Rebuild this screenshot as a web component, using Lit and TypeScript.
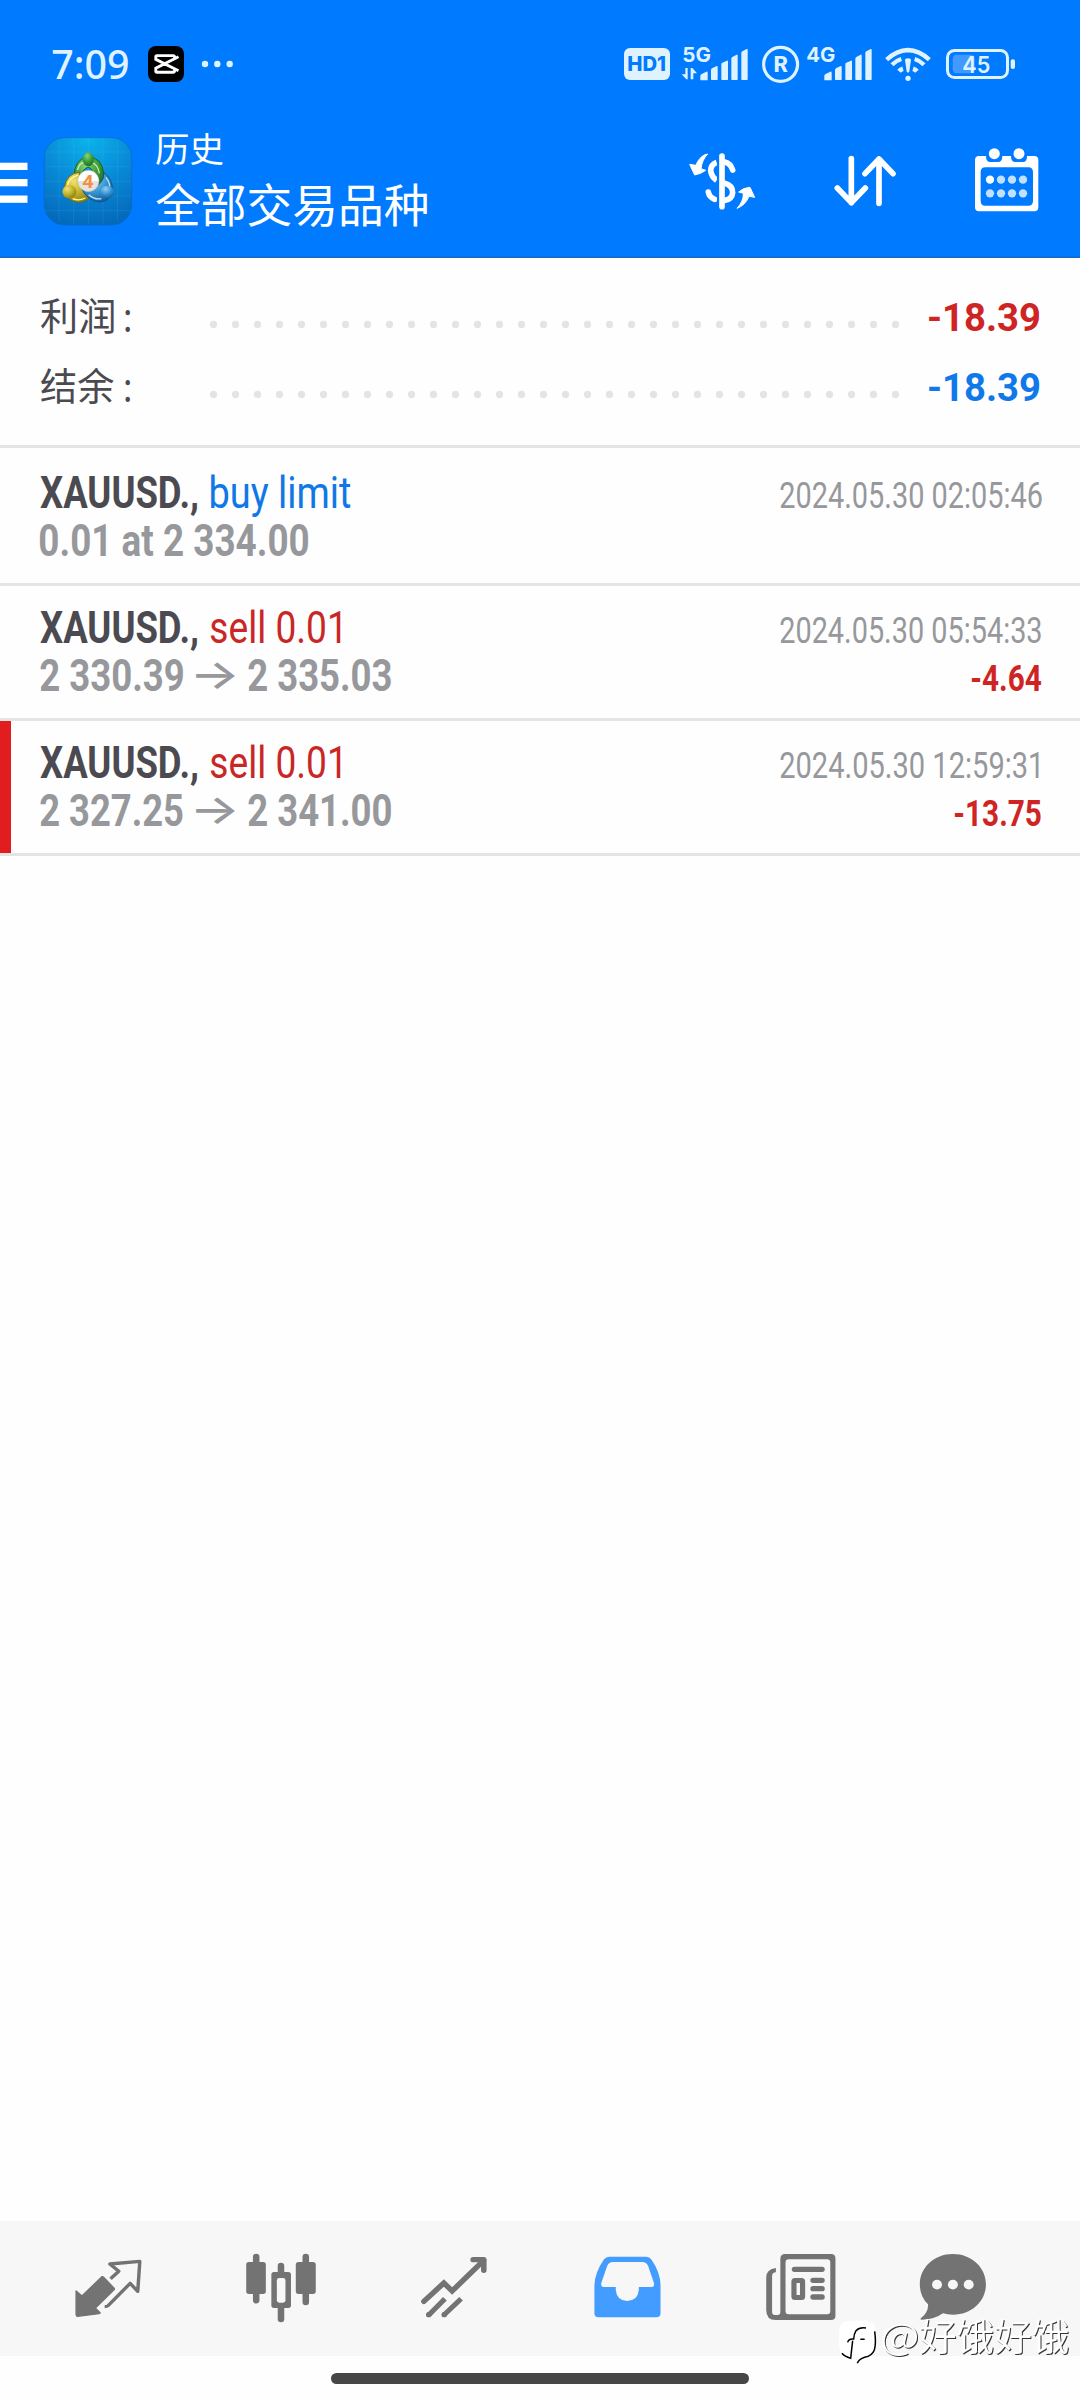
import { LitElement, html, css, svg } from "lit";
import { customElement } from "lit/decorators.js";

const SANS = '"Roboto", "Noto Sans CJK SC", sans-serif';
const CJK = '"Noto Sans CJK SC", sans-serif';

interface FitOptions {
  width: number;
  size: number;
  height: number;
  baseline: number;
  weight?: number;
  color?: string;
  family?: string;
}

const measurer = document.createElement("canvas").getContext("2d")!;

/** A line of text whose inked width is condensed or widened to a given number of pixels. */
function fit(text: string, o: FitOptions) {
  const weight = o.weight ?? 400;
  const family = o.family ?? SANS;
  measurer.font = `${weight} ${o.size}px ${family}`;
  const m = measurer.measureText(text);
  const ink = m.actualBoundingBoxLeft + m.actualBoundingBoxRight;
  const s = o.width / ink;
  return html`<svg class="fit" width=${o.width} height=${o.height}>
    <text
      transform="translate(${m.actualBoundingBoxLeft * s} ${o.baseline}) scale(${s} 1)"
      font-family=${family}
      font-size=${o.size}
      font-weight=${weight}
      fill=${o.color ?? "#fff"}
    >${text}</text>
  </svg>`;
}

/** Fitted text placed inside a drawing; the scale is that of the drawing. */
function inkText(text: string, x: number, y: number, width: number, size: number, weight: number, color: string, family = SANS) {
  measurer.font = `${weight} ${size}px ${family}`;
  const m = measurer.measureText(text);
  const s = width / (m.actualBoundingBoxLeft + m.actualBoundingBoxRight);
  return svg`<text transform="translate(${x + m.actualBoundingBoxLeft * s} ${y}) scale(${s} 1)"
    font-family=${family} font-size=${size} font-weight=${weight} fill=${color}>${text}</text>`;
}

/** One tile of a bar: its slice of the bar's canvas, x to x + w. */
function tile(x: number, y: number, w: number, h: number, body: unknown) {
  return html`<svg class="tile" width=${w} height=${h} viewBox="${x} ${y} ${w} ${h}">${body}</svg>`;
}

const ICE = "#dff2ff";
const BLUE = "#007aff";
const GREY = "#737373";

const bars = (dx: number) => svg`<g fill=${ICE} transform="translate(${dx} 0)">
  <path d="M301 180v-12q0-4 4-6l14-7q4-2 4 3v22q0 1-2 1h-18q-2 0-2-1z"/>
  <path d="M333 178v-27q0-4 3-6l14-7q3-1 3 3v37q0 2-2 2h-16q-2 0-2-2z"/>
  <path d="M364 178v-45q0-4 3-5l14-6q3-1 3 3v53q0 2-2 2h-16q-2 0-2-2z"/>
  <path d="M394 178v-61q0-4 3-6l13-7q3-1 3 3v71q0 2-2 2h-15q-2 0-2-2z"/>
  <path d="M424 178v-78q0-4 3-6l13-7q3-1 3 3v88q0 2-2 2h-15q-2 0-2-2z"/></g>`;

const third = (body: unknown) => svg`<g transform="translate(600 20) scale(.33333)">${body}</g>`;

const clockTile = tile(0, 0, 140, 96, inkText("7:09", 52.3, 78.6, 75.5, 40, 500, ICE, '"Noto Sans", sans-serif'));
const capcutTile = tile(140, 0, 52, 96, svg`
  <rect x="148" y="46" width="36" height="36" rx="8" fill="#000"/>
  <path d="M178.500 56.800L155.800 68.200V71.200Q155.800 72.200 157 72.200H173.200Q174.600 72.200 174.600 70.500V69.500M178.500 70.800L155.800 59.400V56.800Q155.800 55.600 157 55.600H173.200Q174.600 55.600 174.600 57.500V58.200"
    fill="none" stroke="#fff" stroke-width="2.900"/>`);
const moreTile = tile(192, 0, 50, 96, svg`<g fill=${ICE}>
  <circle cx="205" cy="64" r="3.200"/><circle cx="217.300" cy="64" r="3.200"/><circle cx="229.700" cy="64" r="3.200"/></g>`);

const hdTile = tile(612, 0, 64, 96, svg`
  <rect x="624" y="48" width="46" height="32" rx="6" fill=${ICE}/>
  ${inkText("HD1", 628.3, 71.2, 36.7, 20.5, 800, BLUE, '"Inter", sans-serif')}`);
const fiveTile = tile(676, 0, 80, 96, svg`
  ${inkText("5G", 683.3, 61.8, 27.3, 20.5, 700, ICE, '"Inter", sans-serif')}
  ${third(svg`<path d="M256 144h7v34h-4l-14-15h11zM272 178v-34h5l14 16h-11v18z" fill=${ICE}/>${bars(0)}`)}`);
const rTile = tile(756, 0, 48, 96, svg`
  <circle cx="780.600" cy="64.300" r="17" fill="none" stroke=${ICE} stroke-width="3.200"/>
  ${inkText("R", 774.6, 72.4, 13, 22.5, 800, ICE)}`);
const fourTile = tile(804, 0, 74, 96, svg`
  ${inkText("4G", 807.3, 61.8, 27.7, 20.5, 700, ICE, '"Inter", sans-serif')}
  ${third(bars(372))}`);
const wifiTile = tile(878, 0, 60, 96, third(svg`<g fill="none" stroke=${ICE}>
  <path d="M860 119Q890 91 924 90Q958 91 988 119" stroke-width="13"/>
  <path d="M876 134Q888 122 904 117M944 117Q960 122 972 134" stroke-width="13"/>
  <path d="M897 154Q902 148 909 146M939 146Q946 148 951 154" stroke-width="14"/></g>
  <path d="M915 120q0-5 9-5t9 5l-5 34q-1 4-4 4t-4-4z" fill=${ICE}/>
  <circle cx="924" cy="175" r="8" fill=${ICE}/>`));
const batteryTile = tile(938, 0, 142, 96, svg`
  <rect x="947.500" y="50.500" width="60" height="27" rx="7" fill="none" stroke=${ICE} stroke-width="3"/>
  <rect x="952.700" y="54.700" width="22" height="18.500" rx="4" fill="#409aff"/>
  <rect x="1010.700" y="59.300" width="4.300" height="9.700" rx="2" fill=${ICE}/>
  ${inkText("45", 963.3, 72.8, 26.7, 23, 600, ICE, '"Inter", sans-serif')}`);

const menuTile = tile(0, 96, 40, 160, svg`<g fill="#fff">
  <rect x="0" y="162.700" width="27.500" height="7.300"/><rect x="0" y="179" width="27.500" height="7.300"/><rect x="0" y="195.500" width="27.500" height="7.300"/></g>`);

const logoTile = tile(40, 96, 116, 160, svg`
  <defs>
    <radialGradient id="sky" cx=".5" cy="0" r="1.050"><stop offset="0" stop-color="#0bb4ec"/><stop offset=".5" stop-color="#088ad6"/><stop offset="1" stop-color="#0467b9"/></radialGradient>
    <radialGradient id="green" cx=".4" cy=".25" r=".8"><stop offset="0" stop-color="#8fd27a"/><stop offset=".5" stop-color="#3f9f3c"/><stop offset="1" stop-color="#176b22"/></radialGradient>
    <radialGradient id="gold" cx=".35" cy=".3" r=".8"><stop offset="0" stop-color="#f0e270"/><stop offset=".5" stop-color="#c4b32d"/><stop offset="1" stop-color="#85780f"/></radialGradient>
    <radialGradient id="azure" cx=".4" cy=".25" r=".8"><stop offset="0" stop-color="#8fd0f2"/><stop offset=".5" stop-color="#3a97d4"/><stop offset="1" stop-color="#125b9b"/></radialGradient>
    <linearGradient id="disc" x1="0" y1="0" x2="0" y2="1"><stop offset=".5" stop-color="#fff"/><stop offset=".52" stop-color="#e4e2e2"/></linearGradient>
  </defs>
  <g transform="translate(30 120) scale(.33333)">
    <rect x="43" y="53" width="262" height="262" rx="60" fill="url(#sky)" stroke="#0868c4" stroke-width="2"/>
    <path d="M131 55V313M175 55V313M219 55V313M262 62V306M87 62V306M45 96H303M45 140H303M45 184H303M45 228H303M45 271H303" stroke="#7fd4f5" stroke-opacity=".18" stroke-width="2"/>
    <path d="M132 168Q134 116 175 110Q217 114 221 160Q222 182 204 208L186 150Q176 134 162 150L153 164Z" fill="url(#green)" stroke="#19602a" stroke-width="3"/>
    <path d="M142 150Q150 124 166 128M186 128Q204 134 208 160" fill="none" stroke="#c2ecb4" stroke-width="4"/>
    <path d="M150 156Q108 160 103 204Q106 244 146 247Q172 246 184 226L162 204Q142 180 150 156Z" fill="url(#gold)" stroke="#6f6a1a" stroke-width="3"/>
    <path d="M145 165Q116 172 112 198M128 236Q146 244 166 234" fill="none" stroke="#fff6a0" stroke-width="4"/>
    <path d="M222 158Q246 176 247 206Q244 244 208 246Q172 242 155 206Q190 216 212 188Q222 176 222 158Z" fill="url(#azure)" stroke="#13528b" stroke-width="3"/>
    <path d="M228 172Q238 184 240 200M176 224Q194 240 214 236" fill="none" stroke="#b9e6fb" stroke-width="4"/>
    <ellipse cx="175" cy="118" rx="17" ry="21" fill="url(#green)"/>
    <ellipse cx="118" cy="215" rx="21" ry="20" fill="url(#gold)"/>
    <ellipse cx="231" cy="216" rx="21" ry="19" fill="url(#azure)"/>
    <circle cx="175" cy="183" r="32" fill="url(#disc)" stroke="#b9b3a8" stroke-width="1.500"/>
    ${inkText("4", 158, 203, 32, 56, 700, "#f4913c")}
  </g>`);

const currencyTile = tile(660, 96, 130, 160, third(svg`<g fill="none" stroke="#fff" stroke-linecap="round">
    <path d="M366 408V560" stroke-width="17"/>
    <path d="M374 426Q392 430 398 450M374 490Q398 496 398 518Q396 538 374 541M325 516Q328 532 344 538" stroke-width="17"/>
    <path d="M350 427Q332 434 332 452Q334 470 350 481" stroke-width="17" stroke-linecap="butt"/>
  </g>
  <path d="M354 405V562" stroke=${BLUE} stroke-width="6"/>
  <g fill="#fff" stroke="#fff" stroke-linejoin="round" stroke-width="3">
    <path d="M323 402Q302 404 287 436L269 433L284 465Q303 462 317 451L303 446Q306 420 323 402Z"/>
    <path d="M411 565Q431 544 430 520L416 516Q430 503 450 502L464 532L447 529Q436 556 411 565Z"/>
  </g>`));
const sortTile = tile(790, 96, 150, 160, third(svg`<g fill="none" stroke="#fff" stroke-width="17" stroke-linecap="round" stroke-linejoin="round">
    <path d="M754 416V548M712 504L754 548L796 504"/><path d="M837 550V418M795 461L837 417L879 461"/></g>`));
const calendarTile = tile(940, 96, 140, 160, third(svg`
  <path fill="#fff" fill-rule="evenodd" d="M1137 408H1158Q1158 426 1171 426H1194Q1207 426 1207 408H1233Q1233 426 1246 426H1269Q1281 426 1281 408H1303Q1315 408 1315 420V562Q1315 574 1303 574H1137Q1125 574 1125 562V420Q1125 408 1137 408ZM1156 442Q1142 442 1142 456V543Q1142 557 1156 557H1285Q1299 557 1299 543V456Q1299 442 1285 442Z"/>
  <circle cx="1183" cy="401" r="16.500" fill="#fff"/><circle cx="1257" cy="401" r="16.500" fill="#fff"/>
  <circle cx="1170" cy="479" r="12.500" fill="#fff"/>
  <g fill="#c2e0ff"><circle cx="1203" cy="479" r="12.500"/><circle cx="1236" cy="479" r="12.500"/><circle cx="1269" cy="479" r="12.500"/>
  <circle cx="1170" cy="520" r="12.500"/><circle cx="1203" cy="520" r="12.500"/><circle cx="1236" cy="520" r="12.500"/><circle cx="1269" cy="520" r="12.500"/></g>`));

const navLeft = (x: number, w: number, body: unknown) =>
  tile(x, 2221, w, 135, svg`<g transform="translate(0 2210) scale(.34435 .33333)">${body}</g>`);
const navRight = (x: number, w: number, body: unknown) =>
  tile(x, 2221, w, 135, svg`<g transform="translate(540 2210) scale(.34435 .33333)">${body}</g>`);

const quotesTile = navLeft(22, 173, svg`
  <path fill=${GREY} stroke=${GREY} stroke-width="4" stroke-linejoin="round" d="M221 243L238 258L296 200Q298 199 300 201L332 235Q333 237 331 239L277 294L291 309Q291 310 287 311L226 319Q221 319 221 314Z"/>
  <path fill="none" stroke=${GREY} stroke-width="10" stroke-linejoin="round" d="M321 206L345 184L319 162L406 154L400 244L378 220L314 287Q311 290 304 290"/>`);
const chartTile = navLeft(195, 173, svg`
  <g stroke=${GREY} stroke-width="19" stroke-linecap="round"><path d="M744 141V271M888 141V276M816 168V196M816 288V327"/></g>
  <rect x="715" y="156" width="57" height="96" rx="8" fill=${GREY}/><rect x="859" y="156" width="58" height="96" rx="8" fill=${GREY}/>
  <rect x="788" y="186" width="57" height="108" rx="8" fill=${GREY}/><rect x="804" y="204" width="25" height="74" rx="7" fill="#f7f7f7"/>`);
const tradeTile = navLeft(368, 172, svg`<g fill="none" stroke=${GREY} stroke-width="16">
  <path d="M1231 274L1289 219L1313 243L1404 152" stroke-linecap="round"/>
  <path d="M1374 149H1405V181" stroke-linecap="round" stroke-linejoin="round"/></g>
  <g stroke=${GREY} stroke-width="15"><path d="M1246 314L1292 266M1290 314L1339 266"/></g>
  <g fill=${GREY}><circle cx="1245" cy="314" r="8"/><circle cx="1290" cy="314" r="8"/></g>`);
const historyTile = navRight(540, 173, svg`
  <path fill="#439cff" fill-rule="evenodd" d="M201 140H309Q318 140 323 148Q350 188 350 226V310Q350 322 338 322H170Q158 322 158 310V226Q159 188 186 148Q192 140 201 140ZM212 156Q200 156 195 168L178 219Q176 231 185 231H220V240Q223 272 253 273Q284 272 287 240V231H325Q333 231 331 219L314 168Q309 156 297 156Z"/>`);
const newsTile = navRight(713, 160, svg`
  <path fill=${GREY} fill-rule="evenodd" d="M712 132H845Q858 132 858 145V317Q858 330 845 330H684Q657 330 657 300V202Q657 178 685 174V187Q674 188 674 198V306Q674 315 682 315H690Q698 315 698 306V146Q698 132 712 132ZM722 148Q713 148 713 157V304Q713 313 722 313H834Q843 313 843 304V157Q843 148 834 148Z"/>
  <path d="M739 178H819M793 211H819M793 236H819M793 261H819" stroke=${GREY} stroke-width="16" stroke-linecap="round"/>
  <rect x="737.500" y="211.500" width="25" height="51" rx="3" fill="none" stroke=${GREY} stroke-width="15"/>`);
const chatTile = navRight(873, 160, svg`
  <path fill=${GREY} d="M1199 132C1254 132 1295 173 1295 223C1295 273 1254 314 1199 314Q1184 314 1170 310Q1146 329 1107 329Q1103 328 1106 325Q1128 308 1127 283Q1103 260 1103 223C1103 173 1144 132 1199 132Z"/>
  <g fill="#f7f7f7"><circle cx="1153" cy="224" r="14.500"/><circle cx="1199" cy="224" r="14.500"/><circle cx="1245" cy="224" r="14.500"/></g>`);

interface Trade {
  side: string;
  sideWidth: number;
  buy: boolean;
  time: string;
  timeWidth: number;
  open: string;
  close?: string;
  profit?: string;
  profitWidth?: number;
  marked?: boolean;
}

const TRADES: Trade[] = [
  { side: "buy limit", sideWidth: 139.3, buy: true, time: "2024.05.30 02:05:46", timeWidth: 262, open: "0.01 at 2 334.00" },
  { side: "sell 0.01", sideWidth: 129.5, buy: false, time: "2024.05.30 05:54:33", timeWidth: 261.5, open: "2 330.39", close: "2 335.03", profit: "-4.64", profitWidth: 69.3 },
  { side: "sell 0.01", sideWidth: 129.5, buy: false, time: "2024.05.30 12:59:31", timeWidth: 258.5, open: "2 327.25", close: "2 341.00", profit: "-13.75", profitWidth: 86.3, marked: true },
];

@customElement("trade-row")
class TradeRow extends LitElement {
  static properties = { trade: { attribute: false } };
  declare trade: Trade;

  static styles = css`
    :host { display: block; }
    .row { display: flex; justify-content: space-between; box-sizing: border-box; height: 135px; padding: 19px 38px 0 40px; border-bottom: 3px solid #e4e4e4; }
    .marked { padding-left: 29px; border-bottom: none; height: 132px; border-left: 11px solid #e11d1f; }
    .rule { height: 3px; background: #e4e4e4; }
    .line { display: flex; height: 48px; gap: 13px; }
    .prices { gap: 12.600px; }
    .right { width: 262px; }
    .profit { display: flex; justify-content: flex-end; padding-right: 1px; }
    .fit { display: block; overflow: visible; flex: none; }
  `;

  render() {
    const t = this.trade;
    const box = { height: 48, baseline: 37.7 };
    const price = { ...box, size: 44, weight: 700, color: "#97989c" };
    return html`
      <div class="row ${t.marked ? "marked" : ""}">
        <div>
          <div class="line">
            ${fit("XAUUSD.,", { ...box, width: 157.7, size: 43.5, weight: 700, color: "#4b4a50" })}
            ${fit(t.side, { ...box, width: t.sideWidth, size: 44, weight: 450, color: t.buy ? "#0f78e6" : "#c92626" })}
          </div>
          <div class="line prices">
            ${fit(t.open, { ...price, width: t.close ? 143 : 268.7 })}
            ${t.close
              ? html`${fit("→", { ...price, baseline: 36, width: 40, size: 41, weight: 500, family: '"Inter", sans-serif' })}
                ${fit(t.close, { ...price, width: 143.5 })}`
              : ""}
          </div>
        </div>
        <div class="right">
          <div class="line">${fit(t.time, { ...box, width: t.timeWidth, size: 36.5, weight: 450, color: "#97989c" })}</div>
          ${t.profit
            ? html`<div class="profit">${fit(t.profit, { ...box, width: t.profitWidth!, size: 36, weight: 700, color: "#cf2424" })}</div>`
            : ""}
        </div>
      </div>
      ${t.marked ? html`<div class="rule"></div>` : ""}
    `;
  }
}

@customElement("app-root")
class AppRoot extends LitElement {
  static styles = css`
    :host { display: block; width: 1080px; height: 2400px; font-family: "Roboto", "Noto Sans CJK SC", sans-serif; }
    .screen { position: relative; display: flex; flex-direction: column; width: 1080px; height: 2400px; background: #fefefe; overflow: hidden; }
    .top { background: #007aff; border-bottom: 2px solid #0d6fdc; }
    .bar { display: flex; }
    .push { margin-left: auto; }
    .tile, .fit { display: block; overflow: visible; flex: none; }
    .summary { box-sizing: border-box; height: 190px; padding: 28px 40px 0 40.500px; border-bottom: 3px solid #e4e4e4; }
    .total { display: flex; height: 70px; }
    .label { display: flex; gap: 11.500px; width: 169.500px; }
    .value { margin-left: auto; }
    .list { padding-top: 3px; }
    .nav { display: flex; height: 135px; margin-top: auto; padding-left: 22px; background: #f7f7f7; }
    .home { display: flex; justify-content: center; height: 27px; padding-top: 17px; }
    .handle { width: 418px; height: 11px; border-radius: 5.500px; background: #464646; }
    .mark { position: absolute; left: 836px; top: 2310px; }
    .shaded { filter: drop-shadow(1px 1px 0 #333); }
  `;

  private total(label: string, color: string) {
    return html`<div class="total">
      <div class="label">
        ${fit(label, { width: 73.4, size: 38, height: 70, baseline: 43.7, color: "#4b4a50", family: CJK })}
        ${fit(":", { width: 5.6, size: 40, height: 70, baseline: 45.5, weight: 500, color: "#4b4a50" })}
      </div>
      <svg class="tile" width="690" height="70" fill="#e4e4e4">
        ${Array.from({ length: 32 }, (_, i) => svg`<circle cx=${3.5 + i * 22} cy="38.400" r="3.600"/>`)}
      </svg>
      <div class="value">${fit("-18.39", { width: 111, size: 38.5, height: 70, baseline: 45, weight: 700, color })}</div>
    </div>`;
  }

  render() {
    return html`<div class="screen">
      <header class="top">
        <div class="bar">
          ${clockTile}${capcutTile}${moreTile}
          <div class="bar push">${hdTile}${fiveTile}${rTile}${fourTile}${wifiTile}${batteryTile}</div>
        </div>
        <div class="bar">
          ${menuTile}${logoTile}
          <div>
            ${fit("历史", { width: 67, size: 34, height: 82, baseline: 66, family: CJK })}
            ${fit("全部交易品种", { width: 271.5, size: 46, height: 78, baseline: 43.5, family: CJK })}
          </div>
          <div class="bar push">${currencyTile}${sortTile}${calendarTile}</div>
        </div>
      </header>
      <section class="summary">${this.total("利润", "#cf2424")}${this.total("结余", "#1079ea")}</section>
      <section class="list">${TRADES.map((t) => html`<trade-row .trade=${t}></trade-row>`)}</section>
      <nav class="nav">${quotesTile}${chartTile}${tradeTile}${historyTile}${newsTile}${chatTile}</nav>
      <div class="home"><div class="handle"></div></div>
      <svg class="tile mark" width="244" height="60" viewBox="836 2310 244 60">
        <g transform="translate(820 2300) scale(.33333)" fill="none" stroke="#000" stroke-width="4.500">
          <path stroke="none" fill="#fff" d="M84 62H140Q166 64 166 92V138Q162 168 136 173Q120 178 112 190L98 172Q60 168 57 138V92Q60 66 84 62Z"/>
          <path d="M164 94Q169 130 163 150Q156 168 134 172Q116 178 112 190"/>
          <path d="M138 84Q118 81 108 92Q102 102 101 117Q86 115 83 127M121 118H134M66 160Q74 170 92 175L98 122"/>
        </g>
        <g class="shaded">${inkText("@", 882.5, 2349.5, 35, 37, 300, "#fff", CJK)}${inkText("好饿好饿", 920, 2350.5, 149, 37.5, 350, "#fff", CJK)}</g>
      </svg>
    </div>`;
  }
}
